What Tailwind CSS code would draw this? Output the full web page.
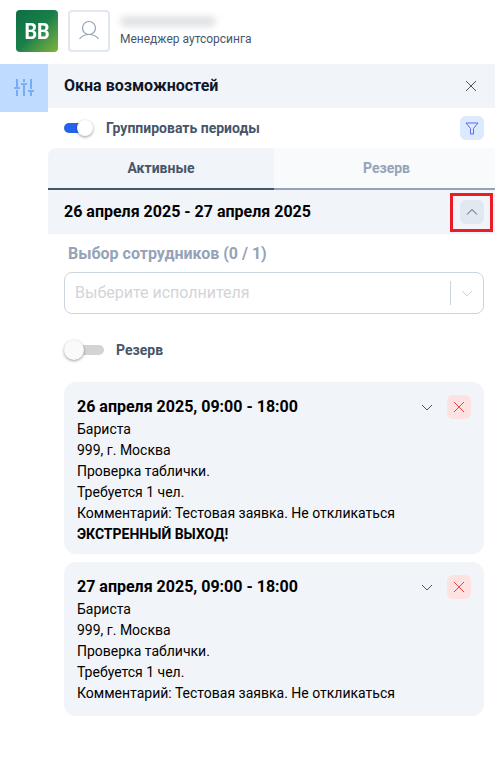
<!DOCTYPE html>
<html lang="en">
<head>
  <meta charset="UTF-8">
  <title>Окна возможностей</title>
  <script src="https://cdn.jsdelivr.net/npm/@tailwindcss/browser@4"></script>
</head>
<body class="bg-white h-[763px] overflow-hidden font-['Roboto',sans-serif]">
  <!-- top bar -->
  <div class="h-16 flex items-start pt-[10px] pl-4">
    <div class="w-[42px] h-[42px] rounded-[4px] bg-gradient-to-br from-[#0b6e45] via-[#1a8048] to-[#7db53c] flex items-center justify-center text-white text-[22px] font-bold">
      <span class="inline-block scale-x-90">BB</span>
    </div>
    <div class="w-[42px] h-[42px] ml-[10px] rounded-[4px] border-2 border-[#e2e8f0] flex items-center justify-center">
      <svg class="w-[26px] h-[26px] text-[#94a3b8]" viewBox="0 0 26 26" fill="none" stroke="currentColor" stroke-width="1.2"><circle cx="13" cy="10" r="6.500"/><path d="M3.500 21c2-3 5.500-4.500 9.500-4.500s7.500 1.500 9.500 4.500"/></svg>
    </div>
    <div class="ml-[10px]">
      <div class="h-[11px] w-[96px] mt-[6px] rounded-full bg-[#e2e3e6] blur-[3px]"></div>
      <div class="text-xs leading-[14px] text-[#475569] mt-[5px]">Менеджер аутсорсинга</div>
    </div>
  </div>

  <div class="flex">
    <!-- left rail -->
    <div class="w-12 shrink-0">
      <div class="h-12 bg-[#bfdbfe] flex items-center justify-center">
        <svg class="w-5 h-5 text-[#3b82f6]" viewBox="0 0 20 20" fill="none" stroke="currentColor" stroke-width="1.100">
          <path d="M3 1v8M3 12v6M10 1v3M10 7v11M17 1v10M17 14v4M0 10h6M7 6h6M14 13h6"/>
        </svg>
      </div>
    </div>

    <!-- panel -->
    <div class="flex-1 min-w-0">
      <div class="h-11 bg-[#f1f4f9] flex items-center justify-between pl-4 pr-4">
        <h1 class="text-base font-bold text-[#0f172a]">Окна возможностей</h1>
        <svg class="w-4 h-4 text-[#475569]" viewBox="0 0 16 16" fill="none" stroke="currentColor" stroke-width="1"><path d="M3 3l10 10M13 3L3 13"/></svg>
      </div>

      <div class="h-10 flex items-center pl-4 pr-[11px]">
        <div class="relative w-[26px] h-[10px] rounded-full bg-[#2563eb]">
          <span class="absolute right-[-3px] top-[-3px] w-4 h-4 rounded-full bg-white shadow-[0_1px_3px_rgba(0,0,0,0.4)]"></span>
        </div>
        <span class="ml-4 text-sm font-bold text-[#475569]">Группировать периоды</span>
        <span class="ml-auto w-6 h-6 rounded-md bg-[#dbeafe] flex items-center justify-center">
          <svg class="w-4 h-4 text-[#6366f1]" viewBox="0 0 16 16" fill="none" stroke="currentColor" stroke-width="1"><path d="M2 3h12L9.500 8.500V14h-3V8.500z"/></svg>
        </span>
      </div>

      <!-- tabs -->
      <div class="flex h-[42px]">
        <div class="w-[226px] rounded-tl-lg bg-[#f1f4f9] border-b-2 border-[#475569] flex items-center justify-center text-sm font-bold text-[#475569]">Активные</div>
        <div class="flex-1 pl-1 bg-[#f8fafc] border-b-2 border-[#94a3b8] flex items-center justify-center text-sm font-bold text-[#94a3b8]">Резерв</div>
      </div>

      <!-- period row -->
      <div class="relative h-11 bg-[#f1f4f9] flex items-center justify-between pl-4 pr-[11px]">
        <span class="text-base font-bold text-black">26 апреля 2025 - 27 апреля 2025</span>
        <span class="w-6 h-6 rounded-md bg-[#e2e8f0] flex items-center justify-center">
          <svg class="w-4 h-4 text-[#475569]" viewBox="0 0 16 16" fill="none" stroke="currentColor" stroke-width="1"><path d="M3 10.500l5-5 5 5"/></svg>
        </span>
        <span class="absolute left-[402px] top-[3px] w-[43px] h-[39px] border-[3px] border-[#ed1c24]"></span>
      </div>

      <!-- employee select -->
      <div class="pl-4 pr-[11px] pt-2">
        <div class="pl-1 text-base leading-[24px] font-bold text-[#94a3b8]">Выбор сотрудников (0 / 1)</div>
        <div class="mt-[6px] h-[42px] rounded-lg border border-[#cbd5e1] flex items-center pl-[10px]">
          <span class="flex-1 text-base text-[#d4d4d8]">Выберите исполнителя</span>
          <span class="h-6 w-px bg-[#cbd5e1]"></span>
          <svg class="w-[14px] h-[14px] mx-[9px] text-[#cbd5e1]" viewBox="0 0 14 14" fill="none" stroke="currentColor" stroke-width="1"><path d="M2 5l5 5 5-5"/></svg>
        </div>

        <div class="mt-[26px] h-5 flex items-center">
          <div class="relative w-[26px] h-[10px] ml-[14px] rounded-full bg-[#d4d4d4]">
            <span class="absolute left-[-14px] top-[-5px] w-5 h-5 rounded-full bg-[#fafafa] shadow-[0_1px_3px_rgba(0,0,0,0.4)]"></span>
          </div>
          <span class="ml-3 text-sm font-bold text-[#475569]">Резерв</span>
        </div>

        <!-- cards -->
        <div class="mt-[22px] flex flex-col gap-2">
          <div class="relative rounded-xl bg-[#f1f4f9] px-[13px] pt-[14px] pb-[10px] text-sm text-black">
            <div class="text-base leading-[21px] font-bold">26 апреля 2025, 09:00 - 18:00</div>
            <div class="mt-[2px] leading-[21px]">Бариста</div>
            <div class="leading-[21px]">999, г. Москва</div>
            <div class="leading-[21px]">Проверка таблички.</div>
            <div class="leading-[21px]">Требуется 1 чел.</div>
            <div class="leading-[21px]">Комментарий: Тестовая заявка. Не откликаться</div>
            <div class="leading-[20px] font-bold">ЭКСТРЕННЫЙ ВЫХОД!</div>
            <div class="absolute right-[13px] top-[13px] flex items-center gap-[13px]">
              <svg class="w-[14px] h-[14px] text-[#475569]" viewBox="0 0 14 14" fill="none" stroke="currentColor" stroke-width="1"><path d="M2 5l5 5 5-5"/></svg>
              <span class="w-6 h-6 rounded-md bg-[#fee2e2] flex items-center justify-center">
                <svg class="w-4 h-4 text-[#ef4444]" viewBox="0 0 16 16" fill="none" stroke="currentColor" stroke-width="1"><path d="M3 3l10 10M13 3L3 13"/></svg>
              </span>
            </div>
          </div>

          <div class="relative rounded-xl bg-[#f1f4f9] px-[13px] pt-[14px] pb-[12px] text-sm text-black">
            <div class="text-base leading-[21px] font-bold">27 апреля 2025, 09:00 - 18:00</div>
            <div class="mt-[2px] leading-[21px]">Бариста</div>
            <div class="leading-[21px]">999, г. Москва</div>
            <div class="leading-[21px]">Проверка таблички.</div>
            <div class="leading-[21px]">Требуется 1 чел.</div>
            <div class="leading-[21px]">Комментарий: Тестовая заявка. Не откликаться</div>
            <div class="absolute right-[13px] top-[13px] flex items-center gap-[13px]">
              <svg class="w-[14px] h-[14px] text-[#475569]" viewBox="0 0 14 14" fill="none" stroke="currentColor" stroke-width="1"><path d="M2 5l5 5 5-5"/></svg>
              <span class="w-6 h-6 rounded-md bg-[#fee2e2] flex items-center justify-center">
                <svg class="w-4 h-4 text-[#ef4444]" viewBox="0 0 16 16" fill="none" stroke="currentColor" stroke-width="1"><path d="M3 3l10 10M13 3L3 13"/></svg>
              </span>
            </div>
          </div>
        </div>
      </div>
    </div>
  </div>
</body>
</html>
